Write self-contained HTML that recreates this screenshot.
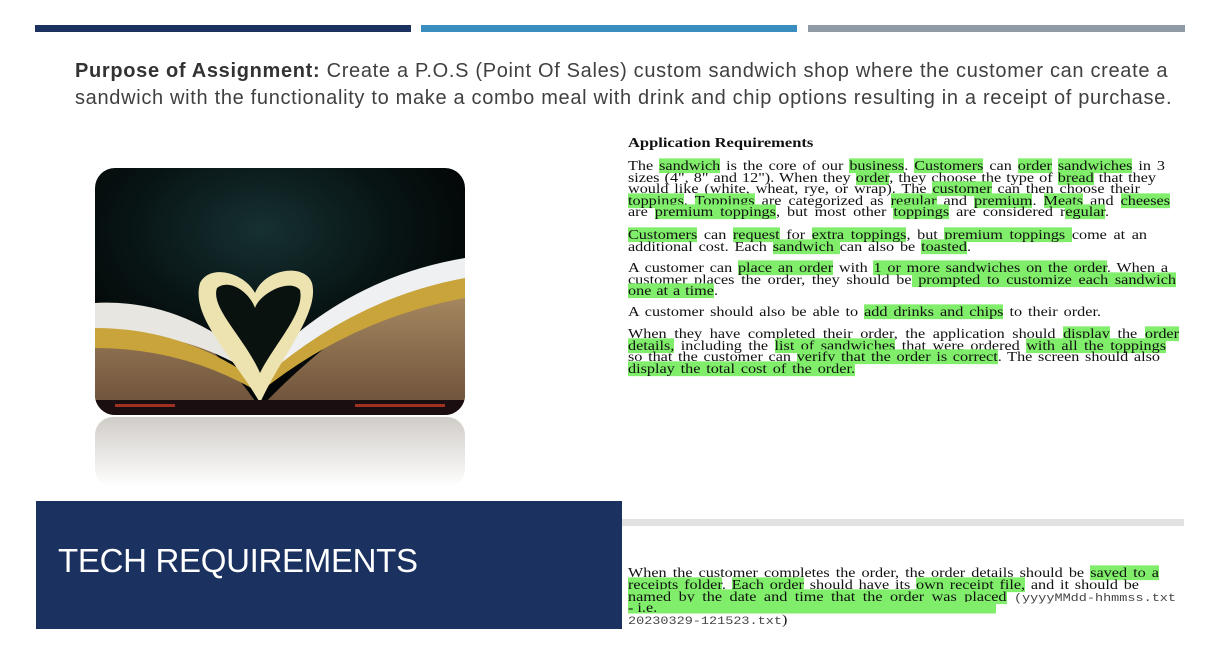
<!DOCTYPE html>
<html><head><meta charset="utf-8"><style>
body{margin:0;width:1212px;height:652px;background:#fff;position:relative;overflow:hidden;font-family:"Liberation Sans",sans-serif}
.bar{position:absolute;top:25px;height:7px}
.p{position:absolute;left:75px;font-size:20px;letter-spacing:0.68px;color:#404040;white-space:nowrap}
.req{position:absolute;left:628px;font-family:"Liberation Serif",serif;font-size:16.2px;color:#111}
.l{position:absolute;left:0;height:14px;line-height:14px;white-space:nowrap;text-align:justify;text-align-last:justify;transform:scaleY(0.82);transform-origin:0 0}
.h{background:#80ee6a}
.m{font-family:"Liberation Mono",monospace;font-size:13.5px;color:#444}
</style></head><body>
<div class="bar" style="left:35px;width:376px;background:#1b3160"></div>
<div class="bar" style="left:421px;width:376px;background:#3a8dbf"></div>
<div class="bar" style="left:808px;width:377px;background:#8e9aa6"></div>
<div class="p" style="top:60px"><b style="color:#333">Purpose of Assignment:</b> Create a P.O.S (Point Of Sales) custom sandwich shop where the customer can create a</div>
<div class="p" style="top:87px">sandwich with the functionality to make a combo meal with drink and chip options resulting in a receipt of purchase.</div>

<svg style="position:absolute;left:95px;top:168px" width="370" height="320" viewBox="0 0 370 320">
<defs>
<clipPath id="c"><rect x="0" y="0" width="370" height="247" rx="20"/></clipPath>
<radialGradient id="bg" cx="0.45" cy="0.25" r="0.6"><stop offset="0" stop-color="#163032"/><stop offset="0.6" stop-color="#081414"/><stop offset="1" stop-color="#030606"/></radialGradient>
<linearGradient id="pg" x1="0" y1="0" x2="0" y2="1"><stop offset="0" stop-color="#b89a6c"/><stop offset="1" stop-color="#6a4e38"/></linearGradient>
<linearGradient id="rf" x1="0" y1="0" x2="0" y2="1"><stop offset="0" stop-color="#d0ccc8"/><stop offset="1" stop-color="#fff"/></linearGradient>
</defs>
<g clip-path="url(#c)">
<rect width="370" height="247" fill="url(#bg)"/>
<path d="M0 135 Q90 130 165 240 Q250 150 370 90 L370 247 L0 247Z" fill="url(#pg)"/>
<path d="M0 135 Q90 130 165 200 L165 210 Q90 160 0 165Z" fill="#e8e6e0"/>
<path d="M0 160 Q90 160 165 215 L165 225 Q90 180 0 180Z" fill="#c9a43a"/>
<path d="M370 90 Q250 110 165 200 L168 210 Q260 140 370 120Z" fill="#eef0f2"/>
<path d="M370 110 Q260 130 168 210 L170 220 Q260 150 370 130Z" fill="#c9a43a"/>
<path d="M165 235 C140 190 95 150 105 115 C115 95 150 105 160 125 C170 100 210 95 217 115 C225 145 185 190 165 235Z" fill="#ece3b0"/>
<path d="M165 205 C150 170 115 140 122 120 C135 110 155 125 160 140 C165 125 195 110 205 122 C210 145 180 175 165 205Z" fill="#0a1210"/>
<rect x="0" y="232" width="370" height="15" fill="#1a0e10"/>
<rect x="20" y="236" width="60" height="3" fill="#a03020"/>
<rect x="260" y="236" width="90" height="3" fill="#a03020"/>
</g>
<rect x="0" y="249" width="370" height="70" rx="18" fill="url(#rf)"/>
</svg>

<div class="req" style="top:2px">
<div class="l" style="top:135px;font-weight:bold;font-size:16.5px;text-align-last:left">Application Requirements</div>
<div class="l" style="top:158px;width:537px">The <span class="h">sandwich</span> is the core of our <span class="h">business</span>. <span class="h">Customers</span> can <span class="h">order</span> <span class="h">sandwiches</span> in 3</div>
<div class="l" style="top:170px;width:528px">sizes (4", 8" and 12"). When they <span class="h">order</span>, they choose the type of <span class="h">bread</span> that they</div>
<div class="l" style="top:181px;width:512px">would like (white, wheat, rye, or wrap). The <span class="h">customer</span> can then choose their</div>
<div class="l" style="top:193px;width:542px"><span class="h">toppings</span>. <span class="h">Toppings</span> are categorized as <span class="h">regular</span> and <span class="h">premium</span>. <span class="h">Meats</span> and <span class="h">cheeses</span></div>
<div class="l" style="top:204px;width:481px">are <span class="h">premium toppings</span>, but most other <span class="h">toppings</span> are considered r<span class="h">egular</span>.</div>
<div class="l" style="top:227px;width:519px"><span class="h">Customers</span> can <span class="h">request</span> for <span class="h">extra toppings</span>, but <span class="h">premium toppings </span>come at an</div>
<div class="l" style="top:239px;width:343px">additional cost. Each <span class="h">sandwich </span>can also be <span class="h">toasted</span>.</div>
<div class="l" style="top:260px;width:540px">A customer can <span class="h">place an order</span> with <span class="h">1 or more sandwiches on the order</span>. When a</div>
<div class="l" style="top:272px;width:548px">customer places the order, they should be<span class="h"> prompted to customize each sandwich</span></div>
<div class="l" style="top:283px;width:90px"><span class="h">one at a time</span>.</div>
<div class="l" style="top:304px;width:473px">A customer should also be able to <span class="h">add drinks and chips</span> to their order.</div>
<div class="l" style="top:326px;width:551px">When they have completed their order, the application should <span class="h">display</span> the <span class="h">order</span></div>
<div class="l" style="top:338px;width:538px"><span class="h">details,</span> including the <span class="h">list of sandwiches</span> that were ordered <span class="h">with all the toppings</span></div>
<div class="l" style="top:349px;width:532px">so that the customer can <span class="h">verify that the order is correct</span>. The screen should also</div>
<div class="l" style="top:361px;width:227px"><span class="h">display the total cost of the order.</span></div>
</div>

<div style="position:absolute;left:36px;top:501px;width:586px;height:128px;background:#1b3160"></div>
<div style="position:absolute;left:58px;top:542px;color:#fff;font-size:33px;letter-spacing:-0.3px">TECH REQUIREMENTS</div>
<div style="position:absolute;left:622px;top:519px;width:562px;height:7px;background:#e2e2e2"></div>

<div class="req" style="top:2px">
<div class="l" style="top:565px;width:531px">When the customer completes the order, the order details should be <span class="h">saved to a</span></div>
<div class="l" style="top:577px;width:511px"><span class="h">receipts folder</span>. <span class="h">Each order</span> should have its <span class="h">own receipt file,</span> and it should be</div>
<div class="l" style="top:589px;width:548px"><span class="h">named by the date and time that the order was placed</span> <span class="m">(yyyyMMdd-hhmmss.txt</span></div>
<div class="l" style="top:600px;text-align-last:left"><span class="h" style="display:inline-block;width:368px">- i.e.</span></div>
<div class="l" style="top:612px;text-align-last:left"><span class="m">20230329-121523.txt</span>)</div>
</div>
</body></html>
